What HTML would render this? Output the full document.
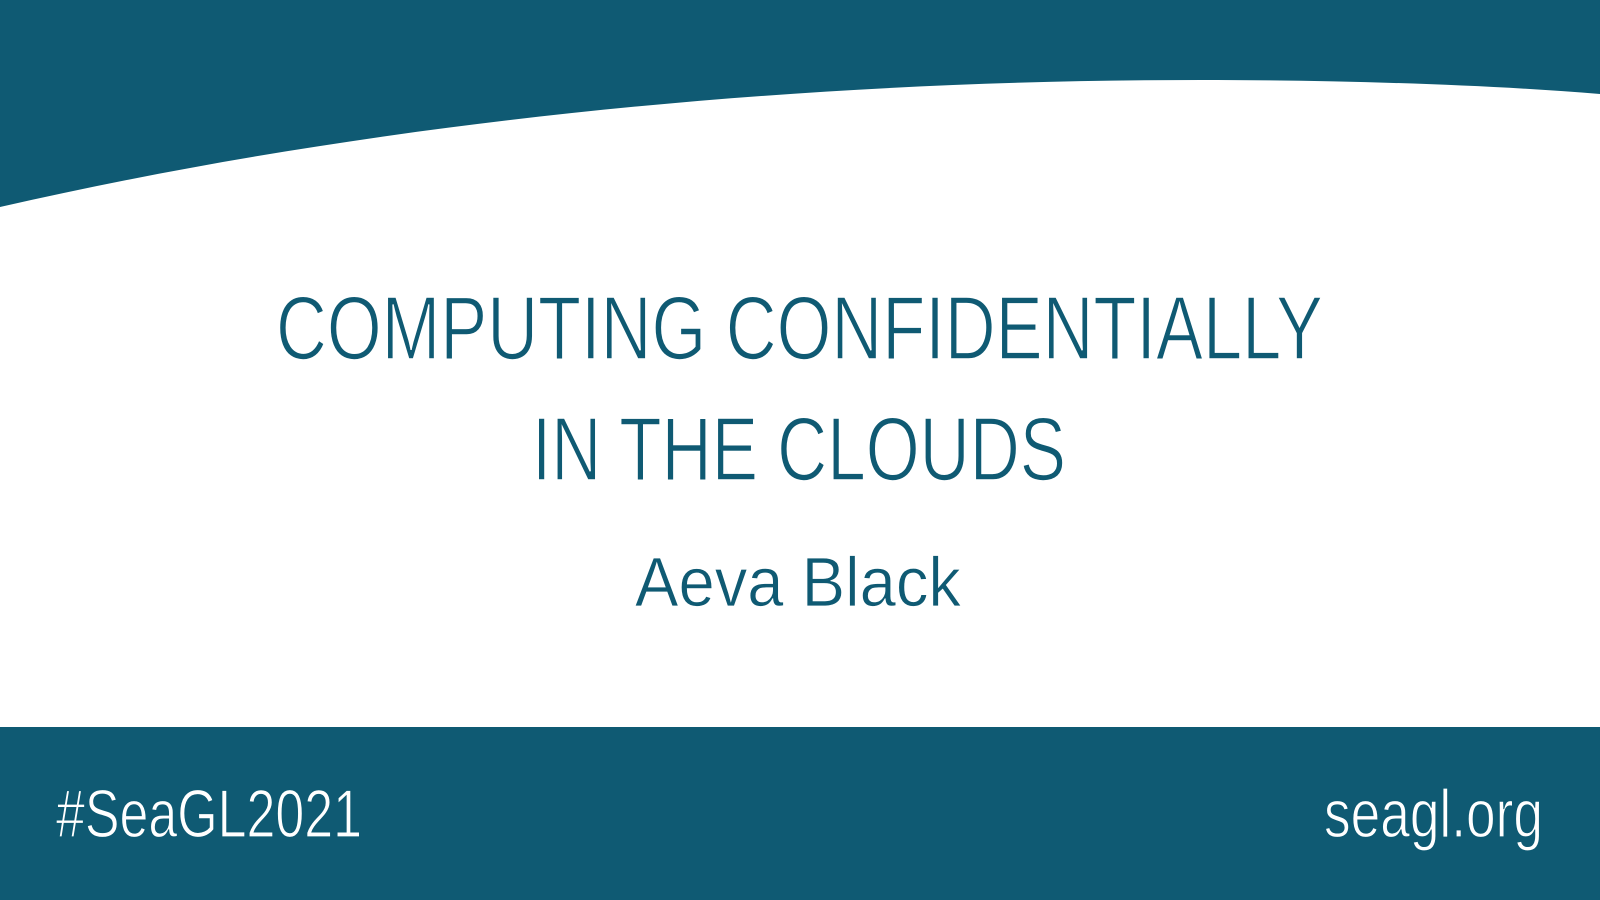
<!DOCTYPE html>
<html><head><style>html,body{margin:0;padding:0;width:1600px;height:900px;overflow:hidden;background:#fff}</style></head>
<body>
<svg width="1600" height="900" viewBox="0 0 1600 900" xmlns="http://www.w3.org/2000/svg">
<rect width="1600" height="900" fill="#fff"/>
<path d="M0 0 H1600 V94 C1480 84 1330 80 1200 80 C800 80 380 120 0 207 Z" fill="#0f5a73"/>
<rect x="0" y="727" width="1600" height="173" fill="#0f5a73"/>
<g font-family="'Liberation Sans Narrow','Liberation Sans',sans-serif" fill="#0f5a73" stroke="#fff" stroke-width="1.6">
<text x="276" y="359" font-size="90" textLength="1047" lengthAdjust="spacingAndGlyphs">COMPUTING CONFIDENTIALLY</text>
<text x="532" y="480" font-size="90" textLength="534" lengthAdjust="spacingAndGlyphs">IN THE CLOUDS</text>
</g>
<text x="635" y="606" font-family="'Liberation Sans',sans-serif" font-size="70" fill="#0f5a73" stroke="#fff" stroke-width="0.8" textLength="326" lengthAdjust="spacingAndGlyphs">Aeva Black</text>
<g font-family="'Liberation Sans Narrow','Liberation Sans',sans-serif" fill="#fff" stroke="#0f5a73" stroke-width="1.2" font-size="68">
<text x="56" y="837" textLength="306" lengthAdjust="spacingAndGlyphs">#SeaGL2021</text>
<text x="1324" y="837" textLength="219" lengthAdjust="spacingAndGlyphs">seagl.org</text>
</g>
</svg>
</body></html>
